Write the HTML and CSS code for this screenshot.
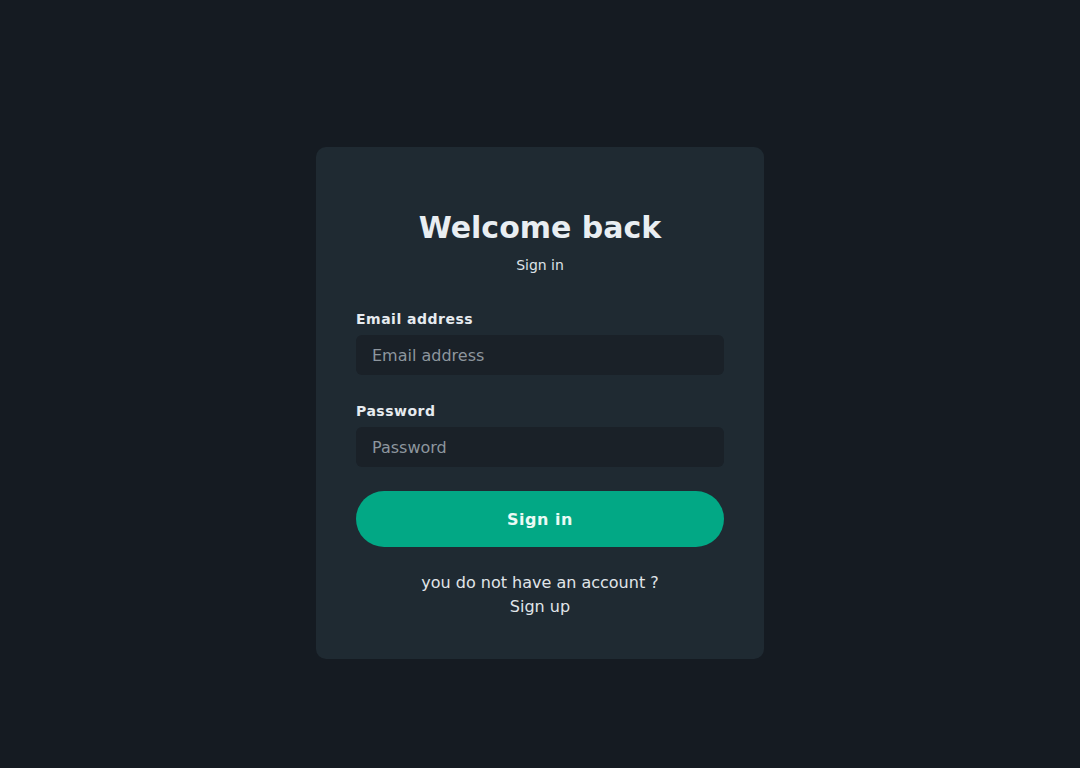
FILE: index.html
```html
<!DOCTYPE html>
<html lang="en">

<head>
    <meta charset="UTF-8">
    <meta name="viewport" content="width=device-width, initial-scale=1.0">
    <title>Welcome back</title>
    <link rel="stylesheet" href="styles.css">
</head>

<body>
    <div class="page">
        <div class="card">
            <h1>Welcome back</h1>
            <p class="subtitle">Sign in</p>
            <form class="login-form">
                <div class="input-group">
                    <label for="email">Email address</label>
                    <input type="email" id="email" name="email" placeholder="Email address">
                </div>
                <div class="input-group">
                    <label for="password">Password</label>
                    <input type="password" id="password" name="password" placeholder="Password">
                </div>
                <button type="submit">Sign in</button>
            </form>
            <div class="signup">
                <p>you do not have an account ?</p>
                <a href="#">Sign up</a>
            </div>
        </div>
    </div>
</body>

</html>
```

FILE: styles.css
```css
body,
html {
    height: 100%;
    margin: 0;
    font-family: "DejaVu Sans", sans-serif;
    background-color: #151b22;
}

.page {
    display: flex;
    justify-content: center;
    padding-top: 147px;
}

.card {
    width: 448px;
    box-sizing: border-box;
    padding: 61px 40px 40px;
    background-color: #1f2a32;
    border-radius: 10px;
    text-align: center;
}

h1 {
    margin: 0;
    font-size: 30px;
    line-height: 40px;
    color: #e9eef2;
}

.subtitle {
    margin: 7px 0 0;
    font-size: 14px;
    line-height: 20px;
    color: #dde3e8;
}

.login-form {
    margin-top: 36px;
    text-align: left;
}

.input-group {
    margin-bottom: 28px;
}

.input-group:last-of-type {
    margin-bottom: 24px;
}

label {
    display: block;
    margin-bottom: 8px;
    font-size: 14px;
    font-weight: bold;
    line-height: 16px;
    letter-spacing: 0.5px;
    color: #e6ebef;
}

input {
    display: block;
    width: 100%;
    box-sizing: border-box;
    height: 40px;
    padding: 0 16px;
    border: none;
    border-radius: 6px;
    background-color: #1a2128;
    font-family: inherit;
    font-size: 16px;
    color: #e6ebef;
}

input::placeholder {
    color: #8d969e;
}

button {
    display: block;
    width: 100%;
    height: 56px;
    border: none;
    border-radius: 28px;
    background-color: #02a885;
    color: #eafaf5;
    font-family: inherit;
    font-size: 16px;
    font-weight: bold;
    letter-spacing: 0.5px;
    cursor: pointer;
}

.signup {
    margin-top: 24px;
    font-size: 16px;
    line-height: 24px;
    color: #e0e5e9;
}

.signup p {
    margin: 0;
}

.signup a {
    color: #e0e5e9;
    text-decoration: none;
}
```
